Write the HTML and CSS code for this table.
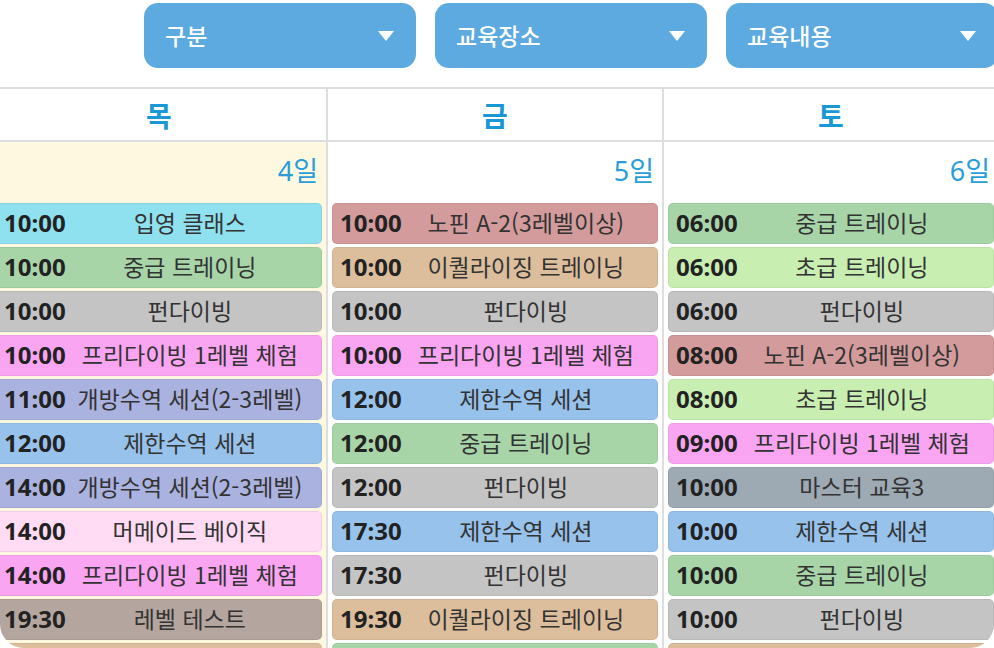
FILE: index.html
```html
<!DOCTYPE html>
<html lang="ko">
<head>
<meta charset="utf-8">
<title>교육 일정</title>
<link rel="stylesheet" href="styles.css">
</head>
<body>
<div class="frame">
  <div class="toolbar">
    <div class="select"><span>구분</span><i class="caret"></i></div>
    <div class="select"><span>교육장소</span><i class="caret"></i></div>
    <div class="select"><span>교육내용</span><i class="caret"></i></div>
  </div>
  <div class="cal">
    <div class="col today">
      <div class="dow">목</div>
      <div class="date">4일</div>
      <div class="events">
        <div class="ev c-cyan"><b>10:00</b><span>입영 클래스</span></div>
        <div class="ev c-green"><b>10:00</b><span>중급 트레이닝</span></div>
        <div class="ev c-gray"><b>10:00</b><span>펀다이빙</span></div>
        <div class="ev c-pink"><b>10:00</b><span>프리다이빙 1레벨 체험</span></div>
        <div class="ev c-lav"><b>11:00</b><span>개방수역 세션(2-3레벨)</span></div>
        <div class="ev c-blue"><b>12:00</b><span>제한수역 세션</span></div>
        <div class="ev c-lav"><b>14:00</b><span>개방수역 세션(2-3레벨)</span></div>
        <div class="ev c-lpink"><b>14:00</b><span>머메이드 베이직</span></div>
        <div class="ev c-pink"><b>14:00</b><span>프리다이빙 1레벨 체험</span></div>
        <div class="ev c-taupe"><b>19:30</b><span>레벨 테스트</span></div>
        <div class="ev c-tan"><b>19:30</b><span>이퀄라이징 트레이닝</span></div>
      </div>
    </div>
    <div class="col">
      <div class="dow">금</div>
      <div class="date">5일</div>
      <div class="events">
        <div class="ev c-rose"><b>10:00</b><span>노핀 A-2(3레벨이상)</span></div>
        <div class="ev c-tan"><b>10:00</b><span>이퀄라이징 트레이닝</span></div>
        <div class="ev c-gray"><b>10:00</b><span>펀다이빙</span></div>
        <div class="ev c-pink"><b>10:00</b><span>프리다이빙 1레벨 체험</span></div>
        <div class="ev c-blue"><b>12:00</b><span>제한수역 세션</span></div>
        <div class="ev c-green"><b>12:00</b><span>중급 트레이닝</span></div>
        <div class="ev c-gray"><b>12:00</b><span>펀다이빙</span></div>
        <div class="ev c-blue"><b>17:30</b><span>제한수역 세션</span></div>
        <div class="ev c-gray"><b>17:30</b><span>펀다이빙</span></div>
        <div class="ev c-tan"><b>19:30</b><span>이퀄라이징 트레이닝</span></div>
        <div class="ev c-green"><b>19:30</b><span>중급 트레이닝</span></div>
      </div>
    </div>
    <div class="col">
      <div class="dow">토</div>
      <div class="date">6일</div>
      <div class="events">
        <div class="ev c-green"><b>06:00</b><span>중급 트레이닝</span></div>
        <div class="ev c-lgreen"><b>06:00</b><span>초급 트레이닝</span></div>
        <div class="ev c-gray"><b>06:00</b><span>펀다이빙</span></div>
        <div class="ev c-rose"><b>08:00</b><span>노핀 A-2(3레벨이상)</span></div>
        <div class="ev c-lgreen"><b>08:00</b><span>초급 트레이닝</span></div>
        <div class="ev c-pink"><b>09:00</b><span>프리다이빙 1레벨 체험</span></div>
        <div class="ev c-slate"><b>10:00</b><span>마스터 교육3</span></div>
        <div class="ev c-blue"><b>10:00</b><span>제한수역 세션</span></div>
        <div class="ev c-green"><b>10:00</b><span>중급 트레이닝</span></div>
        <div class="ev c-gray"><b>10:00</b><span>펀다이빙</span></div>
        <div class="ev c-tan"><b>10:00</b><span>이퀄라이징 트레이닝</span></div>
      </div>
    </div>
  </div>
</div>
</body>
</html>
```

FILE: styles.css
```css
* { box-sizing: border-box; }
html, body { margin: 0; padding: 0; background: #fff; }
body {
  font-family: "Noto Sans", "Noto Sans CJK KR", sans-serif;
  color: #333;
}
.frame {
  width: 994px;
  height: 648px;
  overflow: hidden;
  border-radius: 0 0 24px 24px;
  background: #fff;
}
.toolbar {
  display: flex;
  justify-content: flex-end;
  gap: 19px;
  padding-top: 3px;
  margin-right: -4px;
}
.select {
  width: 272px;
  height: 65px;
  border-radius: 14px;
  background: #5caae0;
  color: #fff;
  display: flex;
  align-items: center;
  justify-content: space-between;
  padding: 0 22px 0 21px;
  font-family: "Noto Sans CJK KR", sans-serif;
  font-size: 23px;
  font-weight: 500;
}
.select span { margin-top: -1px; }
.caret {
  width: 0;
  height: 0;
  border-left: 8px solid transparent;
  border-right: 8px solid transparent;
  border-top: 10px solid #fff;
}
.cal {
  margin-top: 19px;
  margin-left: -8px;
  width: 1006px;
  border-top: 2px solid #dedede;
  display: grid;
  grid-template-columns: 334px 336px 336px;
}
.col + .col { border-left: 2px solid #dedede; }
.dow {
  height: 53px;
  border-bottom: 2px solid #dedede;
  display: flex;
  align-items: center;
  justify-content: center;
  font-family: "Noto Sans CJK KR", sans-serif;
  font-weight: 700;
  font-size: 28px;
  color: #1a98d5;
  background: #fff;
}
.date {
  height: 58px;
  display: flex;
  align-items: center;
  justify-content: flex-end;
  padding: 0 8px 4px 0;
  font-size: 27px;
  color: #2a9ed8;
  font-family: "Noto Sans", "Noto Sans CJK KR", sans-serif;
}
.today { background: #fff8e1; }
.events {
  display: flex;
  flex-direction: column;
  gap: 3px;
  padding: 3px 4px 0;
}
.ev {
  height: 41px;
  border-radius: 5px;
  border: 1px solid rgba(0,0,0,0.06);
  display: flex;
  align-items: center;
  padding: 0 7px;
  white-space: nowrap;
}
.ev b {
  font-family: "Noto Sans", sans-serif;
  font-weight: 700;
  font-size: 24px;
  line-height: 1;
  color: #222;
  margin-top: -2px;
}
.ev span {
  flex: 1;
  text-align: center;
  font-family: "Noto Sans CJK KR", sans-serif;
  font-size: 23px;
  line-height: 1;
  color: #333;
  margin-top: -2px;
}
.c-cyan { background: #8fe1ef; }
.c-green { background: #a8d5a8; }
.c-gray { background: #c4c4c4; }
.c-pink { background: #f9a5f2; }
.c-lav { background: #aab2df; }
.c-blue { background: #97c2ec; }
.c-lpink { background: #ffdcf3; }
.c-taupe { background: #b4a59e; }
.c-rose { background: #d39b9b; }
.c-tan { background: #dcbe9c; }
.c-lgreen { background: #c8eeb1; }
.c-slate { background: #9eaab3; }
```
